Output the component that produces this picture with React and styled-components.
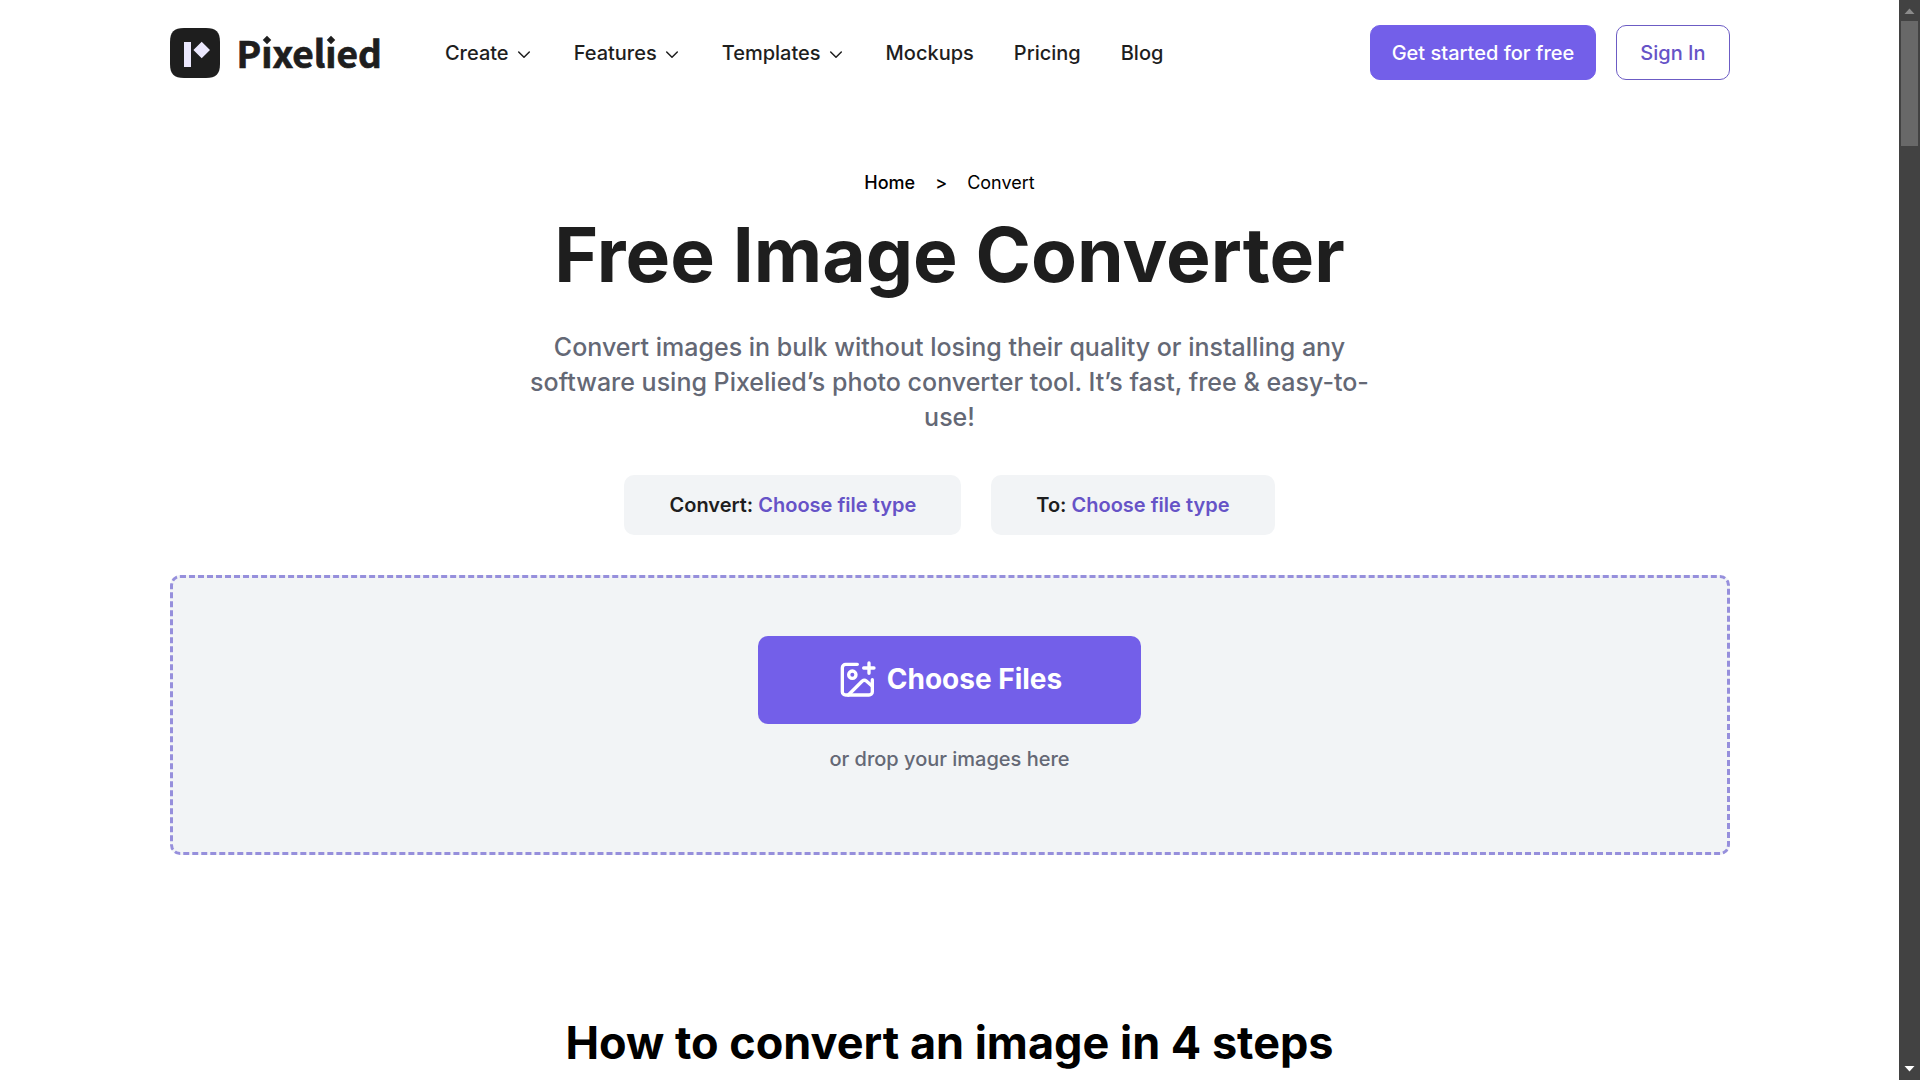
import React from "react";
import styled, { createGlobalStyle } from "styled-components";

const purple = "#735fe9";
const violetText = "#6653c7";
const ink = "#1e1e1e";
const muted = "#646875";
const panel = "#f2f4f6";

const GlobalStyle = createGlobalStyle`
  *, *::before, *::after { box-sizing: border-box; }
  body {
    margin: 0;
    background: #fff;
    color: ${ink};
    font-family: Inter, "Liberation Sans", sans-serif;
    font-size: 20px;
    line-height: 25px;
  }
  button { font: inherit; border: 0; cursor: pointer; }
  a { color: inherit; text-decoration: none; }
`;

const Frame = styled.div`
  display: flex;
  height: 100vh;
  overflow: hidden;
`;

const Page = styled.div`
  flex: 1;
  min-width: 0;
  overflow: hidden;
`;

const Container = styled.div`
  max-width: 1600px;
  margin: 0 auto;
  padding: 0 20px;
`;

const Header = styled.header`
  display: flex;
  align-items: center;
  padding: 25px 0;
`;

const Brand = styled.a`
  display: flex;
  align-items: center;
  gap: 17px;
  margin-right: 63px;
`;

const BrandMark = styled.svg`
  display: block;
  width: 50px;
  height: 50px;
`;

const Wordmark = styled.span`
  padding-bottom: 2px;
  font-family: "Noto Sans CJK SC", "Noto Sans", sans-serif;
  font-weight: 700;
  font-size: 37px;
  line-height: 50px;
  -webkit-text-stroke: 0.02em currentColor;
`;

/* Swaps the round dot of the letter for the brand's diamond. */
const DiamondI = styled.span`
  position: relative;

  &::before,
  &::after {
    content: "";
    position: absolute;
    left: 50%;
  }

  &::before {
    top: 10px;
    width: 10px;
    height: 10px;
    margin-left: -5px;
    background: #fff;
  }

  &::after {
    top: 12px;
    width: 6px;
    height: 6px;
    margin-left: -3px;
    background: ${ink};
    transform: rotate(45deg);
  }
`;

const Nav = styled.nav`
  display: flex;
  align-items: center;
  gap: 40px;
  padding-top: 2px;
  font-weight: 500;
`;

const NavLink = styled.a`
  white-space: nowrap;
`;

const NavMenu = styled.button`
  display: flex;
  align-items: center;
  gap: 5px;
  padding: 0;
  background: none;
  color: inherit;
`;

const Caret = styled.svg`
  width: 20px;
  height: 20px;
  fill: none;
  stroke: currentColor;
  stroke-width: 1.5;
  stroke-linecap: round;
  stroke-linejoin: round;
`;

const Actions = styled.div`
  display: flex;
  gap: 20px;
  margin-left: auto;
`;

const ActionLink = styled.a`
  padding: 15px ${(p) => (p.$outline ? 23 : 21)}px 13px;
  border: 1px solid ${(p) => (p.$outline ? "#6c5cc4" : purple)};
  border-radius: 10px;
  background: ${(p) => (p.$outline ? "#fff" : purple)};
  color: ${(p) => (p.$outline ? violetText : "#fff")};
  font-weight: 500;
  white-space: nowrap;
`;

const Hero = styled.section`
  display: flex;
  flex-direction: column;
  align-items: center;
  padding-top: 65px;
  text-align: center;
`;

const Breadcrumb = styled.nav`
  display: flex;
  gap: 20px;
  color: #000;
  font-size: 18px;
`;

const Crumb = styled.a`
  font-weight: 500;
`;

const Divider = styled.span`
  font-weight: 500;
`;

const Title = styled.h1`
  margin: 15px 0 30px;
  font-size: 75px;
  font-weight: 700;
  line-height: 90px;
`;

const Lead = styled.p`
  max-width: 850px;
  margin: 0;
  color: ${muted};
  font-size: 25px;
  font-weight: 500;
  line-height: 35px;
`;

const TypePickers = styled.div`
  display: flex;
  gap: 30px;
  margin: 40px 0;
`;

const TypeButton = styled.button`
  height: 60px;
  padding: 0 45px;
  border-radius: 10px;
  background: ${panel};
  color: ${ink};
  font-weight: 600;
`;

const Accent = styled.span`
  color: ${violetText};
`;

const DropZone = styled.div`
  display: flex;
  flex-direction: column;
  align-items: center;
  gap: 20px;
  width: 100%;
  min-height: 280px;
  padding: 58px 20px;
  border: 3px dashed #968fdc;
  border-radius: 10px;
  background: ${panel};
`;

const ChooseFiles = styled.button`
  display: flex;
  align-items: center;
  gap: 10px;
  height: 88px;
  padding: 0 79px 2px;
  border-radius: 10px;
  background: ${purple};
  color: #fff;
  font-size: 28px;
  font-weight: 700;
`;

const AddImage = styled.svg`
  width: 40px;
  height: 40px;
  fill: none;
  stroke: currentColor;
  stroke-width: 10;
  stroke-linecap: round;
  stroke-linejoin: round;
`;

const DropHint = styled.p`
  margin: 0;
  color: ${muted};
  font-weight: 500;
  line-height: 30px;
`;

const StepsTitle = styled.h2`
  margin: 160px 0 0;
  color: #000;
  font-size: 45px;
  font-weight: 700;
  line-height: 56px;
  text-align: center;
`;

const ScrollTrack = styled.div`
  display: flex;
  flex-direction: column;
  align-items: center;
  justify-content: space-between;
  width: 21px;
  background: #424242;
`;

const ScrollTop = styled.div`
  display: flex;
  flex-direction: column;
  align-items: center;
  width: 17px;
`;

const ScrollArrow = styled.svg`
  display: block;
  width: 17px;
  height: 21px;
  fill: ${(p) => p.$tone};
`;

const ScrollThumb = styled.div`
  width: 100%;
  height: 125px;
  background: #686868;
`;

function Menu({ label }) {
  return (
    <NavMenu type="button" aria-haspopup="true">
      {label}
      <Caret viewBox="0 0 20 20" aria-hidden="true">
        <path d="M4.7 8 10 13.2 15.3 8" />
      </Caret>
    </NavMenu>
  );
}

function Picker({ label }) {
  return (
    <TypeButton type="button">
      {label} <Accent>Choose file type</Accent>
    </TypeButton>
  );
}

export default function App() {
  return (
    <Frame>
      <GlobalStyle />
      <Page>
        <Container>
          <Header>
            <Brand href="#">
              <BrandMark viewBox="0 0 50 50" aria-hidden="true">
                <path
                  fill={ink}
                  d="M36 0C46 0 50 4 50 14V36C50 46 46 50 36 50H14C4 50 0 46 0 36V14C0 4 4 0 14 0Z"
                />
                <path fill="#ebe8fd" d="M14 14h7v25h-7zM31.700 13.800l8.300 8.200-8.300 8.300-8.300-8.300z" />
              </BrandMark>
              <Wordmark>
                P<DiamondI>i</DiamondI>xel<DiamondI>i</DiamondI>ed
              </Wordmark>
            </Brand>
            <Nav aria-label="Main">
              <Menu label="Create" />
              <Menu label="Features" />
              <Menu label="Templates" />
              <NavLink href="#">Mockups</NavLink>
              <NavLink href="#">Pricing</NavLink>
              <NavLink href="#">Blog</NavLink>
            </Nav>
            <Actions>
              <ActionLink href="#">Get started for free</ActionLink>
              <ActionLink href="#" $outline>
                Sign In
              </ActionLink>
            </Actions>
          </Header>

          <Hero>
            <Breadcrumb aria-label="Breadcrumb">
              <Crumb href="#">Home</Crumb>
              <Divider>&gt;</Divider>
              <span>Convert</span>
            </Breadcrumb>
            <Title>Free Image Converter</Title>
            <Lead>
              Convert images in bulk without losing their quality or installing any software using
              Pixelied’s photo converter tool. It’s fast, free &amp; easy-to-use!
            </Lead>
            <TypePickers>
              <Picker label="Convert:" />
              <Picker label="To:" />
            </TypePickers>
            <DropZone>
              <ChooseFiles type="button">
                <AddImage viewBox="0 0 120 120" aria-hidden="true">
                  <path d="M61 16H26a10 10 0 0 0-10 10V98a10 10 0 0 0 10 10H96a10 10 0 0 0 10-10V62" />
                  <path d="M80 27h31M96 12v31" />
                  <circle cx="46" cy="47" r="11" />
                  <path d="M34 108 76 66q6-5 12 0L106 82" />
                </AddImage>
                Choose Files
              </ChooseFiles>
              <DropHint>or drop your images here</DropHint>
            </DropZone>
          </Hero>

          <StepsTitle>How to convert an image in 4 steps</StepsTitle>
        </Container>
      </Page>

      <ScrollTrack aria-hidden="true">
        <ScrollTop>
          <ScrollArrow viewBox="0 0 17 21" $tone="#8b8b8b">
            <path d="M8.500 8.500 13.500 14H3.500z" />
          </ScrollArrow>
          <ScrollThumb />
        </ScrollTop>
        <ScrollArrow viewBox="0 0 17 21" $tone="#ffffff">
          <path d="M8.500 12.500 13.500 7H3.500z" />
        </ScrollArrow>
      </ScrollTrack>
    </Frame>
  );
}
